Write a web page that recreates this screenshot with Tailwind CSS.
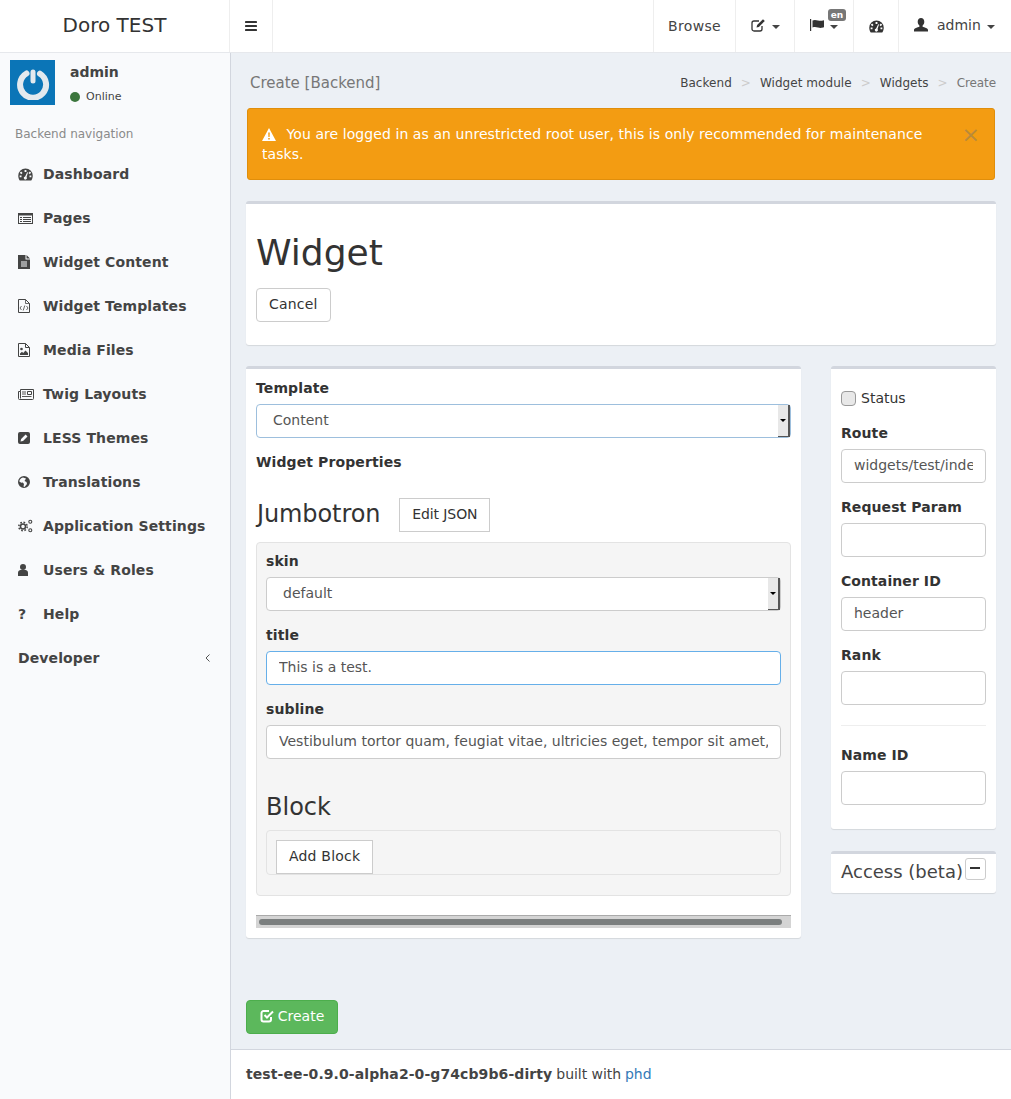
<!DOCTYPE html>
<html lang="en">
<head>
    <meta charset="UTF-8">
    <meta name="viewport" content="width=device-width, initial-scale=1.0">
    <title>Create [Backend]</title>
    <script src="https://cdn.jsdelivr.net/npm/@tailwindcss/browser@4"></script>
</head>
<body class="bg-[#ecf0f5] font-['DejaVu_Sans',sans-serif] text-sm text-[#333] overflow-hidden">
<div class="w-[1011px] h-[1099px] flex flex-col">

    <!-- top bar -->
    <header class="h-[53px] shrink-0 bg-white border-b border-[#e6e8ec] flex text-[#444]">
        <div class="w-[230px] border-r border-[#eee] flex items-center justify-center text-[20px] text-[#333] pb-[2px]">Doro TEST</div>
        <div class="w-[43px] border-r border-[#eee] flex items-center justify-center">
            <svg class="w-3 h-3 text-[#333]" viewBox="0 0 12 12" fill="currentColor"><rect y="1" width="12" height="2" rx=".4"/><rect y="5" width="12" height="2" rx=".4"/><rect y="9" width="12" height="2" rx=".4"/></svg>
        </div>
        <div class="ml-auto flex">
            <div class="w-[83px] border-x border-[#eee] flex items-center justify-center tracking-[0.3px]">Browse</div>
            <div class="w-[59px] border-r border-[#eee] flex items-center justify-center gap-[6px] pb-[2px]">
                <svg class="w-[15px] h-[14px]" viewBox="0 0 15 14" fill="none" stroke="#333" stroke-width="1.3"><path d="M11 8v3a2 2 0 0 1-2 2H3a2 2 0 0 1-2-2V5a2 2 0 0 1 2-2h5"/><path d="M5.500 9.500l.6-2.400L12 1.200l1.800 1.800-5.900 5.900z" fill="#333" stroke="none"/></svg>
                <span class="mt-[3px] w-0 h-0 border-x-4 border-x-transparent border-t-4 border-t-[#444]"></span>
            </div>
            <div class="relative w-[59px] border-r border-[#eee] flex items-center justify-center gap-[5px] pb-[2px]">
                <svg class="w-[15px] h-[12px]" viewBox="0 0 15 12" fill="#333"><rect y="0" width="1.200" height="12"/><path d="M2.500 1.500c2-1 3.500-.5 5.500 0s3 .5 6-.2v7c-3 .8-4 .7-6 .2s-3.500-.8-5.500 0z"/></svg>
                <span class="mt-[3px] w-0 h-0 border-x-4 border-x-transparent border-t-4 border-t-[#444]"></span>
                <span class="absolute left-[33px] top-[9px] h-[12px] w-[18px] rounded-[3px] bg-[#777] text-white text-[9px] leading-[12px] font-bold text-center">en</span>
            </div>
            <div class="w-[45px] border-r border-[#eee] flex items-center justify-center">
                <svg class="w-[15px] h-[13px]" viewBox="0 0 16 14" fill="#333"><path fill-rule="evenodd" d="M8 0.500A7.800 7.800 0 0 0 .2 8.300c0 2 .6 3.700 1.600 5.200h12.400c1-1.500 1.600-3.200 1.600-5.200A7.800 7.800 0 0 0 8 .500zM7 2.200h2v2H7zM3.300 3.800l1.500 1.500-1.400 1.400-1.500-1.500zM12.700 3.800l1.400 1.400-1.500 1.500-1.400-1.400zM1.700 8h2v2h-2zM12.300 8h2v2h-2zM9.800 4.500l.9.4-1.600 4.700a1.700 1.700 0 1 1-1.500-.5z"/></svg>
            </div>
            <div class="w-[112px] flex items-center pl-[15px] pb-[2px]">
                <svg class="w-[14px] h-[14px] mr-[9px]" viewBox="0 0 14 14" fill="#333"><path d="M7 0c2 0 3.300 1.500 3.300 3.700 0 1.600-.8 3-1.700 3.800v1.200c1.600.7 5.400 1.300 5.400 3.300v1.500H0v-1.500c0-2 3.800-2.600 5.400-3.300V7.500C4.500 6.700 3.700 5.300 3.700 3.700 3.700 1.500 5 0 7 0z"/></svg>
                <span>admin</span>
                <span class="ml-[6px] mt-[4px] w-0 h-0 border-x-4 border-x-transparent border-t-4 border-t-[#444]"></span>
            </div>
        </div>
    </header>

    <div class="flex flex-1 min-h-0">
        <!-- sidebar -->
        <aside class="w-[231px] shrink-0 bg-[#f9fafc] border-r border-[#d2d6de] text-[#444]">
            <div class="flex pl-[10px] pt-[7px] h-[70px]">
                <div class="w-[45px] h-[45px] bg-[#0b75b7] flex items-center justify-center">
                    <svg class="w-[34px] h-[34px]" viewBox="0 0 34 34" fill="none" stroke="#e3e9ee" stroke-width="6" stroke-linecap="round"><path d="M10.500 7.500a13 13 0 1 0 13.500 .2"/><path d="M17 6v9" stroke-width="5"/></svg>
                </div>
                <div class="ml-[15px]">
                    <p class="font-bold leading-[20px] pt-[2px]">admin</p>
                    <p class="flex items-center text-[11px] leading-[15px] mt-[7px]"><span class="w-[10px] h-[10px] rounded-full bg-[#3c763d] mr-[6px]"></span>Online</p>
                </div>
            </div>
            <p class="pl-[15px] text-xs text-[#8a8a8a] leading-[16px] mt-[3px] mb-[10px]">Backend navigation</p>
            <nav class="font-bold tracking-[0.11px]">
                <a class="flex items-center h-[44px] pl-[18px]"><svg class="w-[15px] h-[13px] mr-[10px]" viewBox="0 0 16 14" fill="#444"><path fill-rule="evenodd" d="M8 0.500A7.800 7.800 0 0 0 .2 8.300c0 2 .6 3.700 1.600 5.200h12.400c1-1.500 1.600-3.200 1.600-5.200A7.800 7.800 0 0 0 8 .500zM7 2.200h2v2H7zM3.300 3.800l1.500 1.500-1.400 1.400-1.500-1.500zM12.700 3.800l1.400 1.400-1.500 1.500-1.400-1.400zM1.700 8h2v2h-2zM12.300 8h2v2h-2zM9.800 4.500l.9.4-1.600 4.700a1.700 1.700 0 1 1-1.500-.5z"/></svg>Dashboard</a>
                <a class="flex items-center h-[44px] pl-[18px]"><svg class="w-[15px] h-[11px] mr-[10px]" viewBox="0 0 15 11" fill="#444"><path fill-rule="evenodd" d="M0 0h15v11H0zM1 2.500v7.500h13V2.500zM2 4h2v1H2zM5 4h8v1H5zM2 6h2v1H2zM5 6h8v1H5zM2 8h2v1H2zM5 8h8v1H5z"/></svg>Pages</a>
                <a class="flex items-center h-[44px] pl-[18px]"><svg class="w-[12px] h-[14px] mr-[13px]" viewBox="0 0 12 14" fill="#444"><path fill-rule="evenodd" d="M0 0h7.500v4.500H12V14H0zM8.500 0L12 3.500H8.500zM3 6.500v1h6v-1zM3 8.500v1h6v-1zM3 10.500v1h6v-1z"/></svg>Widget Content</a>
                <a class="flex items-center h-[44px] pl-[18px]"><svg class="w-[12px] h-[14px] mr-[13px]" viewBox="0 0 12 14" fill="none" stroke="#444"><path d="M.5.500h7l4 4v9H.5z"/><path d="M7.500.500v4h4M3.500 7L2 9l1.500 2M8.500 7L10 9l-1.500 2M6.800 6.500L5.200 11.500" stroke-width=".8"/></svg>Widget Templates</a>
                <a class="flex items-center h-[44px] pl-[18px]"><svg class="w-[12px] h-[14px] mr-[13px]" viewBox="0 0 12 14" fill="none" stroke="#444"><path d="M.5.500h7l4 4v9H.5z"/><path d="M7.500.500v4h4"/><circle cx="3.500" cy="6" r="1.300" fill="#444" stroke="none"/><path d="M2 12V10.500L4 8.800l1.200 1.200L7.500 7.500 10 10v2z" fill="#444" stroke="none"/></svg>Media Files</a>
                <a class="flex items-center h-[44px] pl-[18px]"><svg class="w-[16px] h-[11px] mr-[9px]" viewBox="0 0 16 11" fill="none" stroke="#444"><path d="M2.500.500h13v9a1 1 0 0 1-1 1H1.500a1 1 0 0 1-1-1V2.500h2zM2.500 2.500v7"/><path d="M9.500 2.500h4v3h-4z"/><path d="M4 3h4M4 5h4M4 7.500h9.500" stroke-width=".9"/></svg>Twig Layouts</a>
                <a class="flex items-center h-[44px] pl-[18px]"><svg class="w-[12px] h-[12px] mr-[13px]" viewBox="0 0 12 12" fill="#444"><path fill-rule="evenodd" d="M2 0h8a2 2 0 0 1 2 2v8a2 2 0 0 1-2 2H2a2 2 0 0 1-2-2V2a2 2 0 0 1 2-2zM2.500 9.500l2.500-.6 4.500-4.500-1.900-1.900L3.100 7z"/></svg>LESS Themes</a>
                <a class="flex items-center h-[44px] pl-[18px]"><svg class="w-[12px] h-[12px] mr-[13px]" viewBox="0 0 12 12" fill="#444"><path fill-rule="evenodd" d="M6 0a6 6 0 1 1 0 12A6 6 0 0 1 6 0zM5 1.500C3 2 1.500 3.500 1.300 5.500l2 1.300 1.500-.3L6 8l-.5 2.500 1 .5 2.500-3-.5-2-2-1 1.500-2.500z"/></svg>Translations</a>
                <a class="flex items-center h-[44px] pl-[18px]"><svg class="w-[15px] h-[14px] mr-[10px]" viewBox="0 0 15 14" fill="none" stroke="#444"><circle cx="5" cy="7.500" r="2.500" stroke-width="1.500"/><circle cx="5" cy="7.500" r="4.200" stroke-width="1.500" stroke-dasharray="1.700 1.600"/><circle cx="12.300" cy="2.700" r="1.500" stroke-width="1.100"/><circle cx="12.300" cy="11.300" r="1.500" stroke-width="1.100"/></svg>Application Settings</a>
                <a class="flex items-center h-[44px] pl-[18px]"><svg class="w-[10px] h-[12px] mr-[15px]" viewBox="0 0 10 12" fill="#444"><circle cx="5" cy="3" r="3"/><path d="M0 12V8.500C0 7 1.500 6 2.500 6h5C8.500 6 10 7 10 8.500V12z"/></svg>Users &amp; Roles</a>
                <a class="flex items-center h-[44px] pl-[18px]"><span class="w-[25px]">?</span>Help</a>
                <a class="flex items-center h-[44px] pl-[18px] pr-[20px] justify-between">Developer<svg class="w-[5px] h-[8px]" viewBox="0 0 5 8" fill="none" stroke="#555"><path d="M4.500.500L1 4l3.500 3.500"/></svg></a>
            </nav>
        </aside>

        <!-- content -->
        <main class="flex-1 flex flex-col min-w-0">
            <div class="flex-1 px-[15px]">
                <div class="h-[55px] flex items-center justify-between pl-[4px] pt-[5px]">
                    <h1 class="text-[15px] text-[#777] pt-[2px]">Create [Backend]</h1>
                    <ol class="flex text-xs text-[#444] tracking-[0.05px]">
                        <li>Backend</li><li class="px-[9px] text-[#ccc]">&gt;</li>
                        <li>Widget module</li><li class="px-[9px] text-[#ccc]">&gt;</li>
                        <li>Widgets</li><li class="px-[9px] text-[#ccc]">&gt;</li>
                        <li class="text-[#777] tracking-[-0.1px]">Create</li>
                    </ol>
                </div>

                <div class="relative mx-[1px] h-[72px] bg-[#f39c12] border border-[#e08e0b] rounded-[3px] text-white pl-[14px] pr-[50px] pt-[15px] leading-[20px] tracking-[0.07px]">
                    <svg class="inline w-[14px] h-[13px] mr-[6px] mb-[2px]" viewBox="0 0 14 13" fill="#fff"><path fill-rule="evenodd" d="M7 0l7 13H0zM6.200 4.500l.2 4.500h1.200l.2-4.500zM6.200 10v1.500h1.600V10z"/></svg>
                    You are logged in as an unrestricted root user, this is only recommended for maintenance tasks.
                    <span class="absolute right-[14px] top-[14px] text-[22px] leading-[24px] text-[#b98a3a]">×</span>
                </div>

                <section class="mt-[21px] h-[144px] bg-white border-t-[3px] border-[#d2d6de] rounded-[3px] shadow-[0_1px_1px_rgba(0,0,0,0.1)] px-[10px]">
                    <h2 class="text-[36px] leading-[40px] pt-[29px] box-content">Widget</h2>
                    <button class="mt-[15px] h-[34px] px-[12px] pb-[2px] bg-white border border-[#ccc] rounded-[4px] tracking-[0.2px]">Cancel</button>
                </section>

                <div class="mt-[21px] flex justify-between items-start">
                    <section class="w-[555px] h-[572px] bg-white border-t-[3px] border-[#d2d6de] rounded-[3px] shadow-[0_1px_1px_rgba(0,0,0,0.1)] px-[10px]">
                        <label class="block font-bold tracking-[0.11px] leading-[20px] mt-[9px] mb-[6px]">Template</label>
                        <div class="h-[34px] border border-[#9dbfdd] rounded-[4px] flex items-center justify-between pl-[16px] text-[#555]"><span class="pb-[2px]">Content</span>
                            <span class="w-[12px] h-[32px] bg-[#e8e8e8] border-r-2 border-b border-r-[#555] border-b-[#555] flex items-center justify-center"><span class="w-0 h-0 border-x-[3px] border-x-transparent border-t-[3px] border-t-black"></span></span>
                        </div>
                        <p class="font-bold tracking-[0.11px] leading-[20px] mt-[14px]">Widget Properties</p>
                        <div class="flex items-center mt-[26px] h-[34px]">
                            <h3 class="text-[24px] leading-[34px] pb-[2px] text-[#333] pl-[1px] tracking-[-0.1px]">Jumbotron</h3>
                            <button class="ml-[19px] h-[34px] w-[91px] pb-[2px] bg-white border border-[#ccc] tracking-[-0.1px]">Edit JSON</button>
                        </div>
                        <div class="mt-[10px] h-[354px] bg-[#f5f5f5] border border-[#e3e3e3] rounded-[4px] px-[9px] pt-[8px]">
                            <label class="block font-bold tracking-[0.11px] leading-[20px] mb-[6px]">skin</label>
                            <div class="h-[34px] bg-white border border-[#ccc] rounded-[4px] flex items-center justify-between pl-[16px] text-[#555]"><span class="pb-[2px]">default</span>
                                <span class="w-[12px] h-[32px] bg-[#e8e8e8] border-r-2 border-b border-r-[#555] border-b-[#555] flex items-center justify-center"><span class="w-0 h-0 border-x-[3px] border-x-transparent border-t-[3px] border-t-black"></span></span>
                            </div>
                            <label class="block font-bold tracking-[0.11px] leading-[20px] mt-[14px] mb-[6px]">title</label>
                            <input class="block w-full h-[34px] bg-white border border-[#66afe9] rounded-[4px] px-[12px] pb-[2px] text-[#555]" value="This is a test.">
                            <label class="block font-bold tracking-[0.11px] leading-[20px] mt-[14px] mb-[6px]">subline</label>
                            <input class="block w-full h-[34px] bg-white border border-[#ccc] rounded-[4px] px-[12px] pb-[2px] text-[#555]" value="Vestibulum tortor quam, feugiat vitae, ultricies eget, tempor sit amet, ante.">
                            <h3 class="text-[24px] leading-[34px] mt-[31px]">Block</h3>
                            <div class="mt-[6px] h-[45px] border border-[#e3e3e3] rounded-[4px] pl-[9px] pt-[9px]">
                                <button class="h-[34px] px-[12px] pb-[2px] bg-white border border-[#ccc] tracking-[0.2px]">Add Block</button>
                            </div>
                        </div>
                        <div class="mt-[19px] h-[13px] bg-[#d4d4d4] border-t border-[#aaa] px-[3px] pt-[3px]">
                            <div class="w-[523px] h-[6px] bg-[#7b7f7f] rounded-[3px]"></div>
                        </div>
                    </section>

                    <div class="w-[165px]">
                        <section class="h-[463px] bg-white border-t-[3px] border-[#d2d6de] rounded-[3px] shadow-[0_1px_1px_rgba(0,0,0,0.1)] px-[10px]">
                            <div class="flex items-center mt-[19px] h-[20px]">
                                <span class="w-[15px] h-[15px] bg-[#e8e8e8] border border-[#999] rounded-[4px] mr-[5px]"></span>Status
                            </div>
                            <label class="block font-bold tracking-[0.08px] leading-[20px] mt-[15px] mb-[6px]">Route</label>
                            <input class="block w-full h-[34px] border border-[#ccc] rounded-[4px] px-[12px] pb-[2px] text-[#555]" value="widgets/test/index">
                            <label class="block font-bold tracking-[0.08px] leading-[20px] mt-[14px] mb-[6px]">Request Param</label>
                            <input class="block w-full h-[34px] border border-[#ccc] rounded-[4px] px-[12px]">
                            <label class="block font-bold tracking-[0.08px] leading-[20px] mt-[14px] mb-[6px]">Container ID</label>
                            <input class="block w-full h-[34px] border border-[#ccc] rounded-[4px] px-[12px] pb-[2px] text-[#555]" value="header">
                            <label class="block font-bold tracking-[0.08px] leading-[20px] mt-[14px] mb-[6px]">Rank</label>
                            <input class="block w-full h-[34px] border border-[#ccc] rounded-[4px] px-[12px]">
                            <hr class="mt-[20px] border-[#eee]">
                            <label class="block font-bold tracking-[0.08px] leading-[20px] mt-[19px] mb-[6px]">Name ID</label>
                            <input class="block w-full h-[34px] border border-[#ccc] rounded-[4px] px-[12px]">
                        </section>
                        <section class="mt-[22px] h-[42px] bg-white border-t-[3px] border-[#d2d6de] rounded-[3px] shadow-[0_1px_1px_rgba(0,0,0,0.1)] pl-[10px] flex">
                            <h4 class="text-[18px] leading-[36px] text-[#444] whitespace-nowrap">Access (beta)</h4>
                            <button class="ml-[2px] mt-[4px] w-[21px] h-[22px] shrink-0 border border-[#ccc] rounded-[3px] flex justify-center pt-[8px]"><span class="w-[10px] h-[2px] bg-[#333]"></span></button>
                        </section>
                    </div>
                </div>

                <button class="mt-[62px] w-[92px] h-[34px] pb-[2px] bg-[#5cb85c] border border-[#4cae4c] rounded-[4px] text-white flex items-center justify-center gap-[4px]">
                    <svg class="w-[14px] h-[14px]" viewBox="0 0 14 14" fill="none" stroke="#fff" stroke-width="2"><path d="M11 8v2.500a2 2 0 0 1-2 2H3.500a2 2 0 0 1-2-2V4a2 2 0 0 1 2-2H9"/><path d="M4.500 6l2.500 2.500 6-6"/></svg>Create
                </button>
            </div>

            <footer class="h-[50px] shrink-0 bg-white border-t border-[#d2d6de] pl-[15px] pb-[2px] flex items-center text-[#444]">
                <b class="tracking-[0.09px]">test-ee-0.9.0-alpha2-0-g74cb9b6-dirty</b><span class="ml-[4px] tracking-[-0.05px]">built with</span><a class="ml-[4px] text-[#337ab7]">phd</a>
            </footer>
        </main>
    </div>
</div>
</body>
</html>
